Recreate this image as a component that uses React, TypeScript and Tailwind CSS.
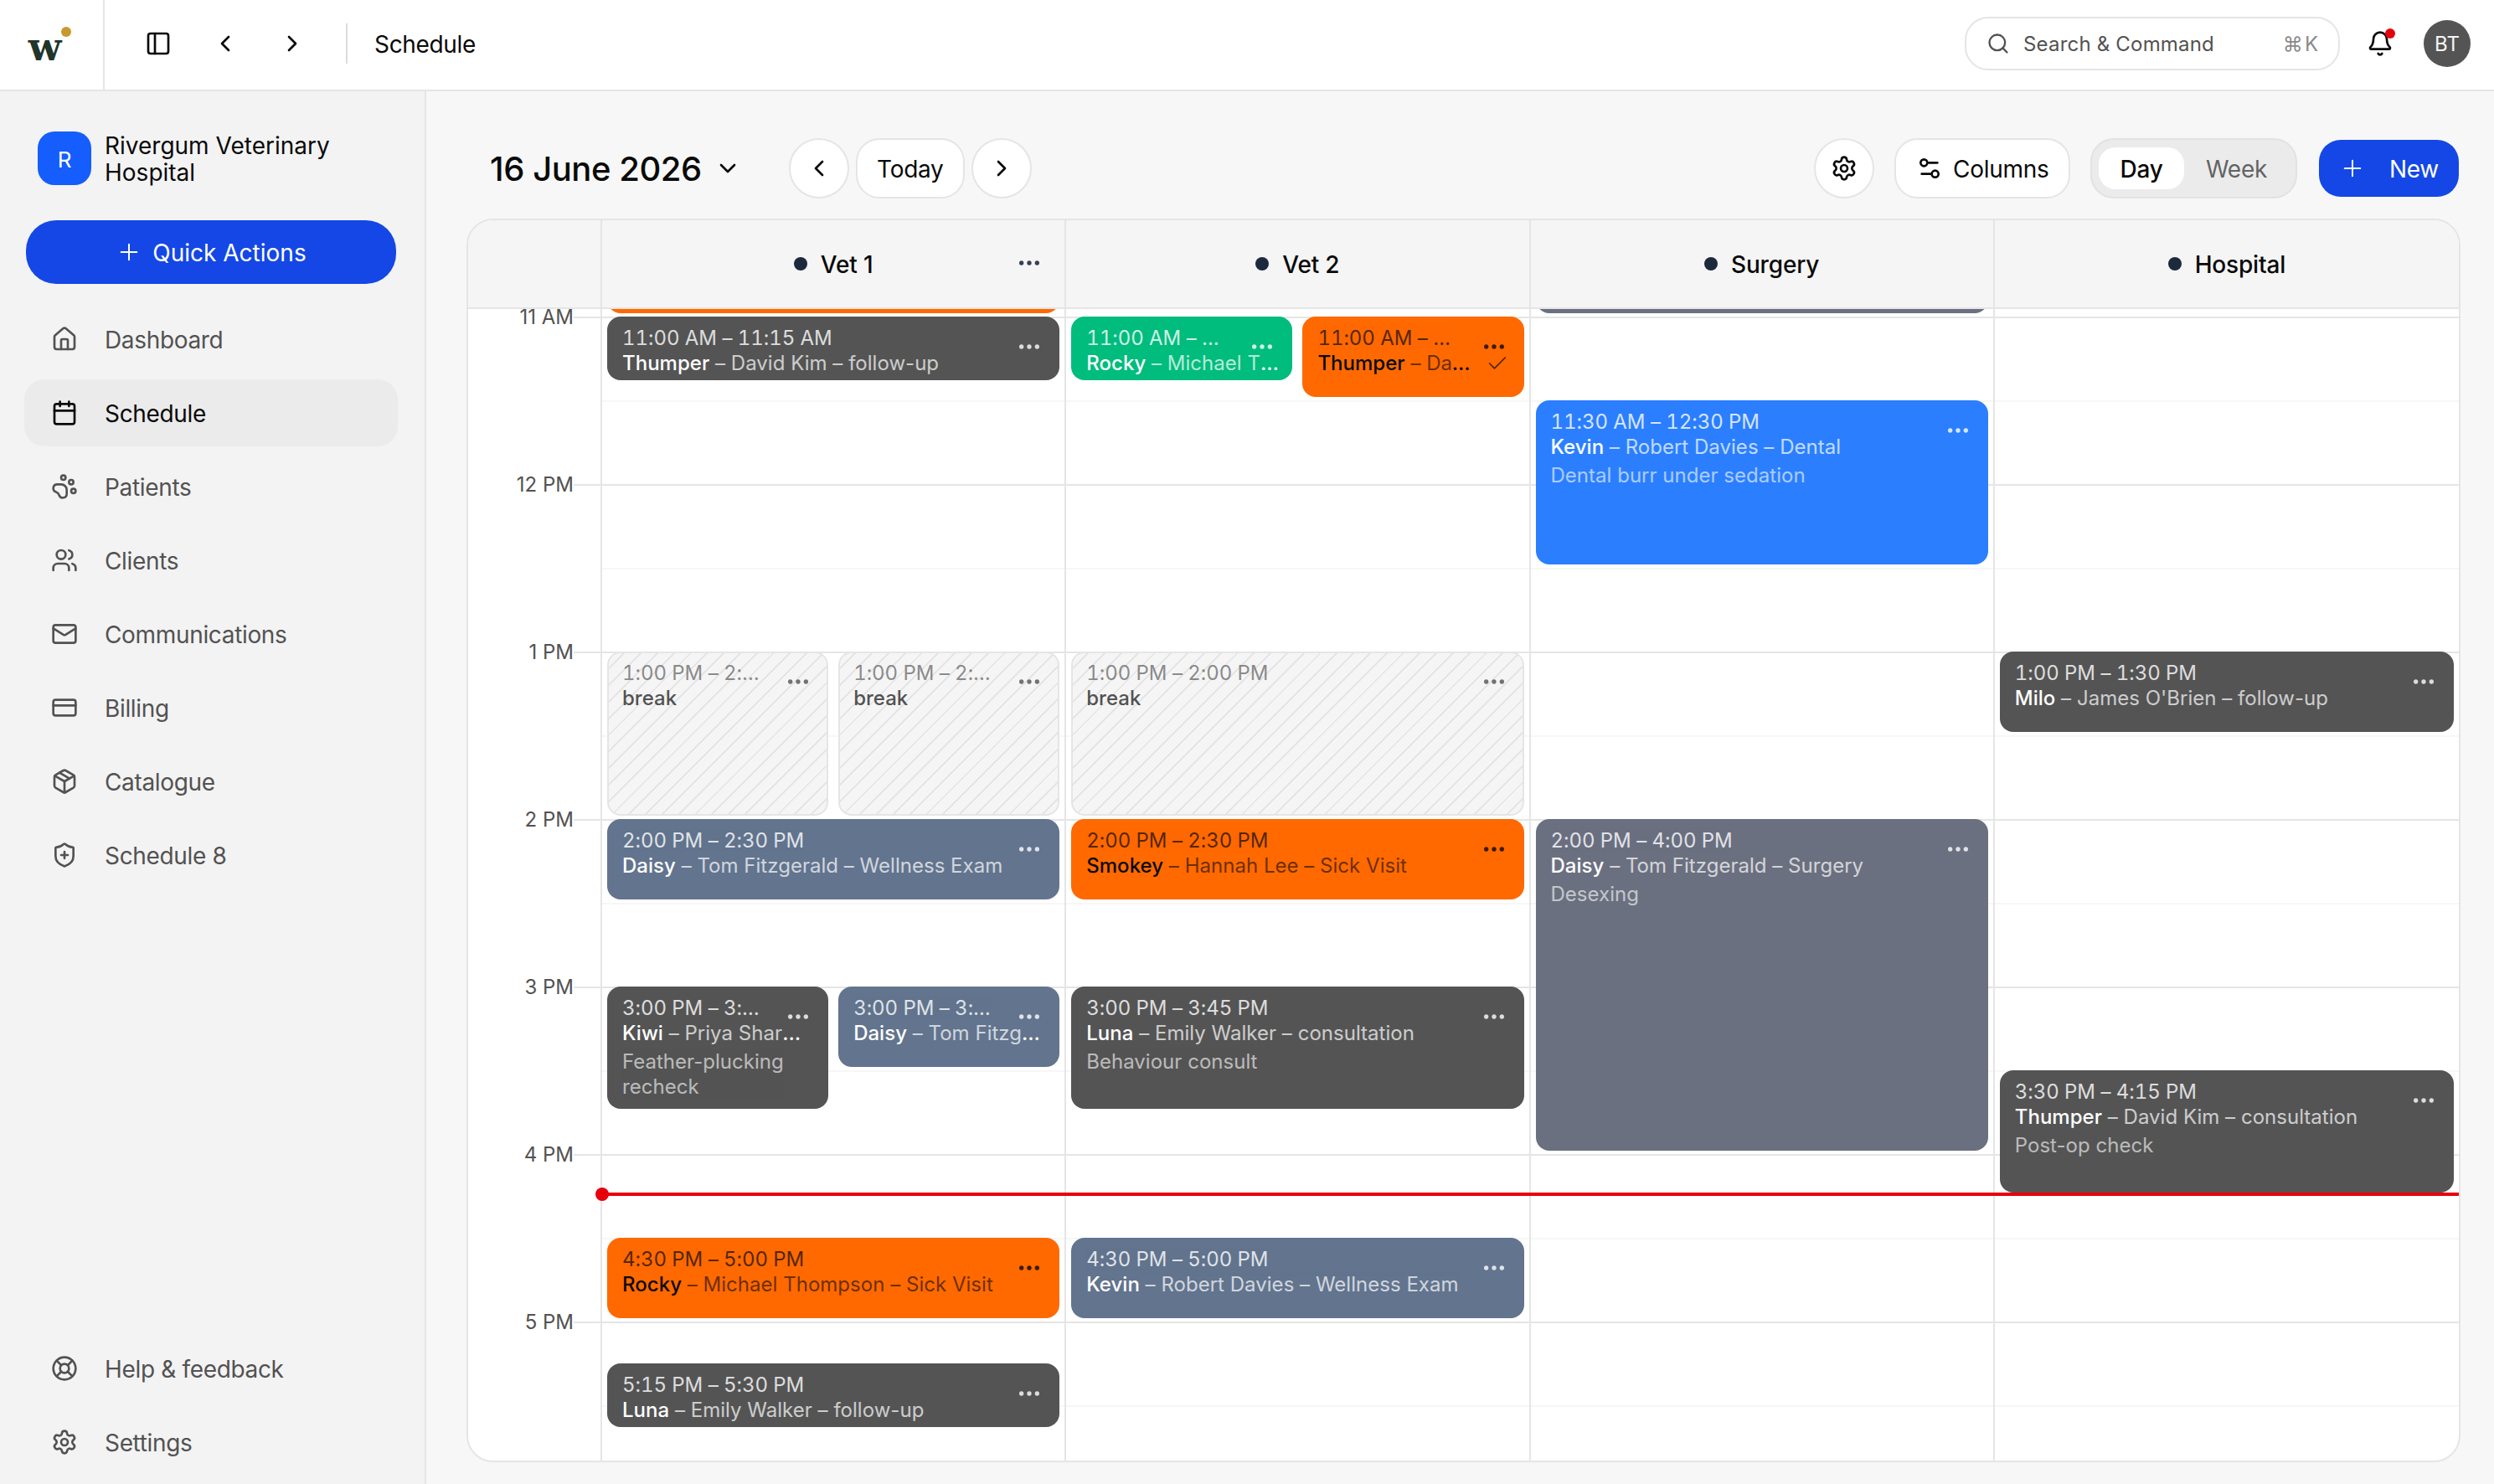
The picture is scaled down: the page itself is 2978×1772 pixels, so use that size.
import type { ReactNode } from "react";
import {
  Bell,
  Calendar,
  Check,
  ChevronDown,
  ChevronLeft,
  ChevronRight,
  CreditCard,
  Ellipsis,
  House,
  LifeBuoy,
  Mail,
  Package,
  PanelLeft,
  PawPrint,
  Plus,
  Search,
  Settings,
  Settings2,
  ShieldPlus,
  Users,
  type LucideIcon,
} from "lucide-react";
import clsx from "clsx";

type Tone = "dark" | "green" | "orange" | "blue" | "slate" | "gray" | "break";

type CalendarEvent = {
  start: number;
  end: number;
  time: string;
  title: string;
  detail?: string;
  note?: string;
  tone: Tone;
  lane?: "left" | "right";
  done?: boolean;
};

const HOUR_HEIGHT = 200;
const FIRST_HOUR = 11;
const TOP_OFFSET = 9;
const MIN_EVENT_HEIGHT = 76;

const HOURS = ["11 AM", "12 PM", "1 PM", "2 PM", "3 PM", "4 PM", "5 PM"];

const NAV: Array<{ label: string; icon: LucideIcon }> = [
  { label: "Dashboard", icon: House },
  { label: "Schedule", icon: Calendar },
  { label: "Patients", icon: PawPrint },
  { label: "Clients", icon: Users },
  { label: "Communications", icon: Mail },
  { label: "Billing", icon: CreditCard },
  { label: "Catalogue", icon: Package },
  { label: "Schedule 8", icon: ShieldPlus },
];

const FOOTER_NAV: Array<{ label: string; icon: LucideIcon }> = [
  { label: "Help & feedback", icon: LifeBuoy },
  { label: "Settings", icon: Settings },
];

const COLUMNS: Array<{ name: string; menu?: boolean; events: CalendarEvent[] }> = [
  {
    name: "Vet 1",
    menu: true,
    events: [
      { start: 10.5, end: 11, time: "", title: "", tone: "orange" },
      { start: 11, end: 11.25, time: "11:00 AM – 11:15 AM", title: "Thumper", detail: "David Kim – follow-up", tone: "dark" },
      { start: 13, end: 14, time: "1:00 PM – 2:00 PM", title: "break", tone: "break", lane: "left" },
      { start: 13, end: 14, time: "1:00 PM – 2:00 PM", title: "break", tone: "break", lane: "right" },
      { start: 14, end: 14.5, time: "2:00 PM – 2:30 PM", title: "Daisy", detail: "Tom Fitzgerald – Wellness Exam", tone: "slate" },
      { start: 15, end: 15.75, time: "3:00 PM – 3:45 PM", title: "Kiwi", detail: "Priya Sharma – consultation", note: "Feather-plucking recheck", tone: "dark", lane: "left" },
      { start: 15, end: 15.5, time: "3:00 PM – 3:30 PM", title: "Daisy", detail: "Tom Fitzgerald – Wellness Exam", tone: "slate", lane: "right" },
      { start: 16.5, end: 17, time: "4:30 PM – 5:00 PM", title: "Rocky", detail: "Michael Thompson – Sick Visit", tone: "orange" },
      { start: 17.25, end: 17.5, time: "5:15 PM – 5:30 PM", title: "Luna", detail: "Emily Walker – follow-up", tone: "dark" },
    ],
  },
  {
    name: "Vet 2",
    events: [
      { start: 11, end: 11.25, time: "11:00 AM – 11:15 AM", title: "Rocky", detail: "Michael Thompson – follow-up", tone: "green", lane: "left" },
      { start: 11, end: 11.5, time: "11:00 AM – 11:30 AM", title: "Thumper", detail: "David Kim – Sick Visit", tone: "orange", lane: "right", done: true },
      { start: 13, end: 14, time: "1:00 PM – 2:00 PM", title: "break", tone: "break" },
      { start: 14, end: 14.5, time: "2:00 PM – 2:30 PM", title: "Smokey", detail: "Hannah Lee – Sick Visit", tone: "orange" },
      { start: 15, end: 15.75, time: "3:00 PM – 3:45 PM", title: "Luna", detail: "Emily Walker – consultation", note: "Behaviour consult", tone: "dark" },
      { start: 16.5, end: 17, time: "4:30 PM – 5:00 PM", title: "Kevin", detail: "Robert Davies – Wellness Exam", tone: "slate" },
    ],
  },
  {
    name: "Surgery",
    events: [
      { start: 10, end: 11, time: "", title: "", tone: "gray" },
      { start: 11.5, end: 12.5, time: "11:30 AM – 12:30 PM", title: "Kevin", detail: "Robert Davies – Dental", note: "Dental burr under sedation", tone: "blue" },
      { start: 14, end: 16, time: "2:00 PM – 4:00 PM", title: "Daisy", detail: "Tom Fitzgerald – Surgery", note: "Desexing", tone: "gray" },
    ],
  },
  {
    name: "Hospital",
    events: [
      { start: 13, end: 13.5, time: "1:00 PM – 1:30 PM", title: "Milo", detail: "James O'Brien – follow-up", tone: "dark" },
      { start: 15.5, end: 16.25, time: "3:30 PM – 4:15 PM", title: "Thumper", detail: "David Kim – consultation", note: "Post-op check", tone: "dark" },
    ],
  },
];

const TONES: Record<Tone, string> = {
  dark: "bg-[#545454] text-white",
  green: "bg-[#00bc7d] text-white",
  orange: "bg-[#ff6900] text-neutral-950",
  blue: "bg-[#2b7fff] text-white",
  slate: "bg-[#62748e] text-white",
  gray: "bg-[#6b7080] text-white",
  break:
    "border-2 border-[#e5e5e5] bg-[#f5f5f5] bg-[repeating-linear-gradient(135deg,transparent_0px,transparent_12px,#e5e5e5_12px,#e5e5e5_14px)] text-[#525252]",
};

function NavItem({ label, icon: Icon, active }: { label: string; icon: LucideIcon; active?: boolean }) {
  return (
    <a
      className={clsx(
        "flex h-20 items-center gap-8 rounded-3xl px-8 text-[28px] tracking-[-0.012em]",
        active ? "bg-[#ebebeb] text-neutral-950" : "text-[#525252]",
      )}
    >
      <Icon className="size-8" />
      <span className="pt-0.5">{label}</span>
    </a>
  );
}

function RoundButton({ children }: { children: ReactNode }) {
  return (
    <button className="grid size-18 place-items-center rounded-full border-2 border-[#e5e5e5] bg-white">
      {children}
    </button>
  );
}

function Logo() {
  return (
    <div className="relative flex w-[125px] items-center justify-center border-r-2 border-[#e5e5e5]">
      <span className="-ml-4 pt-1 font-['DejaVu_Serif',serif] text-[46px] leading-none font-bold text-[#20352b]">w</span>
      <span className="absolute top-8 left-[73px] size-3 rounded-full bg-[#c7992e]" />
    </div>
  );
}

function TopBar() {
  return (
    <header className="flex h-[109px] shrink-0 border-b-2 border-[#e5e5e5] bg-white">
      <Logo />
      <div className="flex flex-1 items-center pr-7 pb-[3px] pl-12">
        <PanelLeft className="size-8" />
        <ChevronLeft className="ml-12 size-8" />
        <ChevronRight className="ml-12 size-8" />
        <div className="ml-12 h-12 w-0.5 bg-[#dcdcdc]" />
        <span className="ml-8 pt-0.5 text-[28px] tracking-[-0.012em]">Schedule</span>

        <div className="ml-auto flex h-16 w-[448px] items-center rounded-[28px] border-2 border-[#e5e5e5] px-6 text-2xl text-[#525252]">
          <Search className="size-7" />
          <span className="ml-4 pt-0.5 tracking-[0.008em]">Search &amp; Command</span>
          <span className="ml-auto flex gap-0.5 pt-0.5 text-[#8a8a8a]">
            <span>⌘</span>
            <span>K</span>
          </span>
        </div>
        <div className="relative ml-8">
          <Bell className="size-8" />
          <span className="absolute -top-0.5 -right-0.5 size-3 rounded-full bg-[#e7000b]" />
        </div>
        <div className="ml-9 grid size-14 place-items-center rounded-full bg-[#545454] pt-0.5 text-2xl text-neutral-100">
          BT
        </div>
      </div>
    </header>
  );
}

function Sidebar() {
  return (
    <aside className="flex w-[509px] shrink-0 flex-col border-r-2 border-[#e5e5e5] bg-[#f3f3f3] pt-12 pr-8 pb-2.5 pl-[29px]">
      <div className="flex h-16 items-center gap-4 pl-4">
        <div className="grid size-16 place-items-center rounded-[20px] bg-[#155dfc] pt-0.5 text-[26px] text-white">R</div>
        <div className="pt-0.5 text-[28px] leading-8">
          Rivergum Veterinary
          <br />
          Hospital
        </div>
      </div>

      <button className="mx-0.5 mt-[42px] flex h-[76px] items-center justify-center gap-3 rounded-[36px] bg-[#1447e6] text-[28px] text-white">
        <Plus className="size-8" strokeWidth={1.5} />
        <span className="pt-0.5">Quick Actions</span>
      </button>

      <nav className="mt-[26px] flex flex-1 flex-col gap-2">
        {NAV.map((item) => (
          <NavItem key={item.label} {...item} active={item.label === "Schedule"} />
        ))}
      </nav>
      <nav className="flex flex-col gap-2">
        {FOOTER_NAV.map((item) => (
          <NavItem key={item.label} {...item} />
        ))}
      </nav>
    </aside>
  );
}

function Toolbar() {
  return (
    <div className="flex h-18 items-center justify-between pl-7">
      <div className="flex items-center">
        <h1 className="pt-0.5 text-[40px] leading-none font-medium tracking-[-0.011em]">16 June 2026</h1>
        <ChevronDown className="ml-[15px] size-8" />
        <div className="ml-[57px] flex gap-2">
          <RoundButton>
            <ChevronLeft className="size-8" />
          </RoundButton>
          <button className="h-18 w-[130px] rounded-[28px] border-2 border-[#e5e5e5] bg-white pt-0.5 text-[28px] tracking-[-0.01em]">
            Today
          </button>
          <RoundButton>
            <ChevronRight className="size-8" />
          </RoundButton>
        </div>
      </div>

      <div className="flex items-center gap-6 text-[28px] tracking-[-0.01em]">
        <RoundButton>
          <Settings className="size-8" />
        </RoundButton>
        <button className="flex h-18 w-[210px] items-center gap-3 rounded-[28px] border-2 border-[#e5e5e5] bg-white pl-6">
          <Settings2 className="size-8" />
          <span className="pt-0.5">Columns</span>
        </button>
        <div className="flex h-18 w-[247px] items-center rounded-[28px] border-2 border-[#e2e2e2] bg-[#ebebeb] px-2">
          <button className="h-[50px] w-[102px] rounded-[20px] bg-white pt-0.5 font-medium">Day</button>
          <button className="h-[50px] flex-1 pt-0.5 text-[#636363]">Week</button>
        </div>
        <button className="flex h-18 w-[171px] items-center justify-between rounded-[28px] border-2 border-transparent bg-[#1447e6] bg-clip-padding px-6 text-white">
          <Plus className="size-8" strokeWidth={1.5} />
          <span className="pt-0.5">New</span>
        </button>
      </div>
    </div>
  );
}

function EventCard({ event }: { event: CalendarEvent }) {
  const { tone, lane, title, detail, note, time, done } = event;
  const isBreak = tone === "break";
  const isOrange = tone === "orange";
  const height = Math.max((event.end - event.start) * HOUR_HEIGHT - 4, MIN_EVENT_HEIGHT);

  return (
    <article
      className={clsx(
        "absolute overflow-hidden rounded-2xl text-2xl leading-[30px] tracking-[0.001em]",
        isBreak ? "pt-[9px] pr-3 pl-4" : "pt-[11px] pr-3.5 pl-[18px]",
        !lane && "inset-x-1.5",
        lane === "left" && "left-1.5 w-[calc(50%-12px)]",
        lane === "right" && "right-1.5 w-[calc(50%-12px)]",
        TONES[tone],
      )}
      style={{ top: TOP_OFFSET + (event.start - FIRST_HOUR) * HOUR_HEIGHT, height }}
    >
      <div
        className={clsx(
          "truncate pr-16 tracking-[-0.002em] tabular-nums",
          isBreak ? "opacity-65" : isOrange ? "opacity-70" : "opacity-80",
        )}
      >
        {time}
      </div>
      <div className="flex items-center gap-2.5">
        <div className="min-w-0 truncate font-medium">
          {title}
          {detail && <span className={clsx("font-normal", isOrange ? "opacity-60" : "opacity-70")}> – {detail}</span>}
        </div>
        {done && <Check className="mr-1 size-7 shrink-0 opacity-70" strokeWidth={1.5} />}
      </div>
      {note && <div className="mt-1 opacity-60">{note}</div>}
      <Ellipsis className={clsx("absolute size-8 opacity-80", isBreak ? "top-[18px] right-[18px]" : "top-5 right-5")} />
    </article>
  );
}

function ScheduleBoard() {
  return (
    <section className="mt-6 flex min-h-0 flex-1 flex-col overflow-hidden rounded-[32px] border-2 border-[#e5e5e5] bg-white">
      <div className="flex h-[106px] shrink-0 border-b-2 border-[#e5e5e5] bg-[#f5f5f5]">
        <div className="w-40 shrink-0 border-r-2 border-[#e5e5e5]" />
        <div className="grid flex-1 grid-cols-4">
          {COLUMNS.map((col) => (
            <div
              key={col.name}
              className="relative flex items-center justify-center gap-4 border-r-2 border-[#e5e5e5] text-[28px] font-medium tracking-[-0.006em] last:border-r-0"
            >
              <span className="size-4 rounded-full bg-[#1d293d]" />
              <span className="pt-0.5">{col.name}</span>
              {col.menu && <Ellipsis className="absolute top-[35px] right-[26px] size-8 text-[#364153]" />}
            </div>
          ))}
        </div>
      </div>

      <div className="relative flex min-h-0 flex-1 overflow-hidden">
        <div className="w-40 shrink-0 border-r-2 border-[#e5e5e5] pt-[9px]">
          {HOURS.map((hour) => (
            <div key={hour} className="flex h-[200px] items-start justify-end">
              <div className="-mt-3.5 flex h-[30px] items-center text-2xl text-[#525252]">
                {hour}
                <span className="h-0.5 w-8 bg-[#e5e5e5]" />
              </div>
            </div>
          ))}
        </div>

        <div className="grid flex-1 grid-cols-4">
          {COLUMNS.map((col) => (
            <div key={col.name} className="relative border-r-2 border-[#e5e5e5] pt-[9px] last:border-r-0">
              {HOURS.map((hour) => (
                <div key={hour} className="h-[200px] border-t-2 border-[#e5e5e5] pt-[98px]">
                  <div className="h-0.5 bg-[#f7f7f7]" />
                </div>
              ))}
              {col.events.map((event, i) => (
                <EventCard key={i} event={event} />
              ))}
            </div>
          ))}
        </div>

        {/* current time */}
        <span className="absolute top-[1055px] right-0 left-40 h-1 bg-[#e7000b]" />
        <span className="absolute top-[1049px] left-[152px] size-4 rounded-full bg-[#e7000b]" />
      </div>
    </section>
  );
}

export default function App() {
  return (
    <div className="flex h-screen flex-col overflow-hidden bg-[#f7f7f7] font-['Inter',sans-serif] text-neutral-950">
      <TopBar />
      <div className="flex min-h-0 flex-1">
        <Sidebar />
        <main className="flex min-w-0 flex-1 flex-col pt-14 pr-10 pb-[26px] pl-12">
          <Toolbar />
          <ScheduleBoard />
        </main>
      </div>
    </div>
  );
}
